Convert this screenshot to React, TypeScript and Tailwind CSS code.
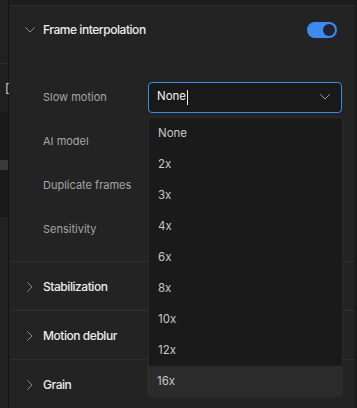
import React from "react";

const ChevronDown = ({ className = "" }: { className?: string }) => (
  <svg className={className} width="10" height="6" viewBox="0 0 10 6" fill="none">
    <path d="M0.5 0.5 L5 5 L9.5 0.5" stroke="currentColor" strokeWidth="1" strokeLinecap="round" strokeLinejoin="round" />
  </svg>
);

const ChevronRight = () => (
  <svg width="6" height="10" viewBox="0 0 6 10" fill="none" className="text-[#8a8a8a]">
    <path d="M0.5 0.5 L5 5 L0.5 9.5" stroke="currentColor" strokeWidth="1" strokeLinecap="round" strokeLinejoin="round" />
  </svg>
);

const options = ["None", "2x", "3x", "4x", "6x", "8x", "10x", "12x", "16x"];
const labels = ["Slow motion", "AI model", "Duplicate frames", "Sensitivity"];
const sections = ["Stabilization", "Motion deblur", "Grain"];

export default function App() {
  return (
    <div className="w-[357px] h-[408px] flex overflow-hidden bg-[#1c1c1c] font-['Inter',sans-serif]">
      {/* left strip */}
      <div className="w-[8px] flex flex-col shrink-0">
        <div className="h-[64px] bg-[#212121] border-b border-[#2e2e2e]" />
        <div className="h-[48px] bg-[#202020] relative">
          <span className="absolute left-[5px] top-[17px] text-[12px] leading-[14px] text-[#d0d0d0]">[</span>
        </div>
        <div className="h-[105px] bg-[#1a1a1a] flex flex-col pt-[48px]">
          <div className="h-[10px] bg-[#3a3a3a]" />
        </div>
        <div className="flex-1 bg-[#212121]" />
      </div>
      <div className="w-px bg-[#141414] shrink-0" />

      {/* main panel */}
      <div className="w-[345px] shrink-0 flex flex-col relative">
        <div className="h-[5px] bg-[#1c1c1c]" />
        <div className="flex-1 flex flex-col bg-[#232323] border-t border-[#2c2c2c]">
          {/* header */}
          <div className="h-[48px] flex items-center pl-[16px] pr-[17px]">
            <ChevronDown className="text-[#8a8a8a]" />
            <span className="ml-[8px] text-[12px] font-medium tracking-[-0.45px] text-[#ececec]">Frame interpolation</span>
            <div className="ml-auto w-[30px] h-[16px] rounded-full bg-[#3d8bf2] flex items-center justify-end pr-[2px]">
              <div className="w-[12px] h-[12px] rounded-full bg-[#1f2530]" />
            </div>
          </div>

          {/* rows */}
          <div className="flex flex-col pt-[21px] pb-[10px]">
            {labels.map((l, i) => (
              <div key={l} className="h-[44px] flex items-center pl-[34px] pr-[12px]">
                <span className="w-[105px] text-[11px] text-[#a5a5a5]">{l}</span>
                {i === 0 ? (
                  <div className="w-[194px] h-[31px] rounded-[4px] border border-[#3b8ae6] bg-[#191919] flex items-center pl-[8px] pr-[11px]">
                    <span className="text-[11.5px] text-[#f0f0f0]">None</span>
                    <span className="w-px h-[15px] bg-[#f0f0f0] ml-px" />
                    <ChevronDown className="ml-auto text-[#9a9a9a]" />
                  </div>
                ) : null}
              </div>
            ))}
          </div>

          {sections.map((s) => (
            <div key={s} className="h-[49px] shrink-0 flex items-center pl-[18px] pt-[2px] border-t border-[#2e2e2e]">
              <ChevronRight />
              <span className="ml-[10px] text-[12px] font-medium tracking-[-0.45px] text-[#ececec]">{s}</span>
            </div>
          ))}
        </div>

        {/* dropdown overlay */}
        <div className="absolute left-[138px] top-[117px] w-[196px] flex flex-col">
          <div className="w-[195px] ml-[1px] bg-[#1a1a1a] border-x border-t border-[#2a2a2a] rounded-t-[4px] flex flex-col">
            {options.slice(0, 8).map((o) => (
              <div key={o} className="h-[31px] flex items-center pl-[9px] pt-[1px] text-[11.5px] text-[#c8c8c8]">
                {o}
              </div>
            ))}
          </div>
          <div className="h-[31px] bg-[#2b2b2b] rounded-b-[4px] flex items-center pl-[10px] pt-[1px] text-[11.5px] text-[#c8c8c8]">
            16x
          </div>
        </div>
      </div>
      <div className="flex-1 bg-[#1c1c1c]" />
    </div>
  );
}
